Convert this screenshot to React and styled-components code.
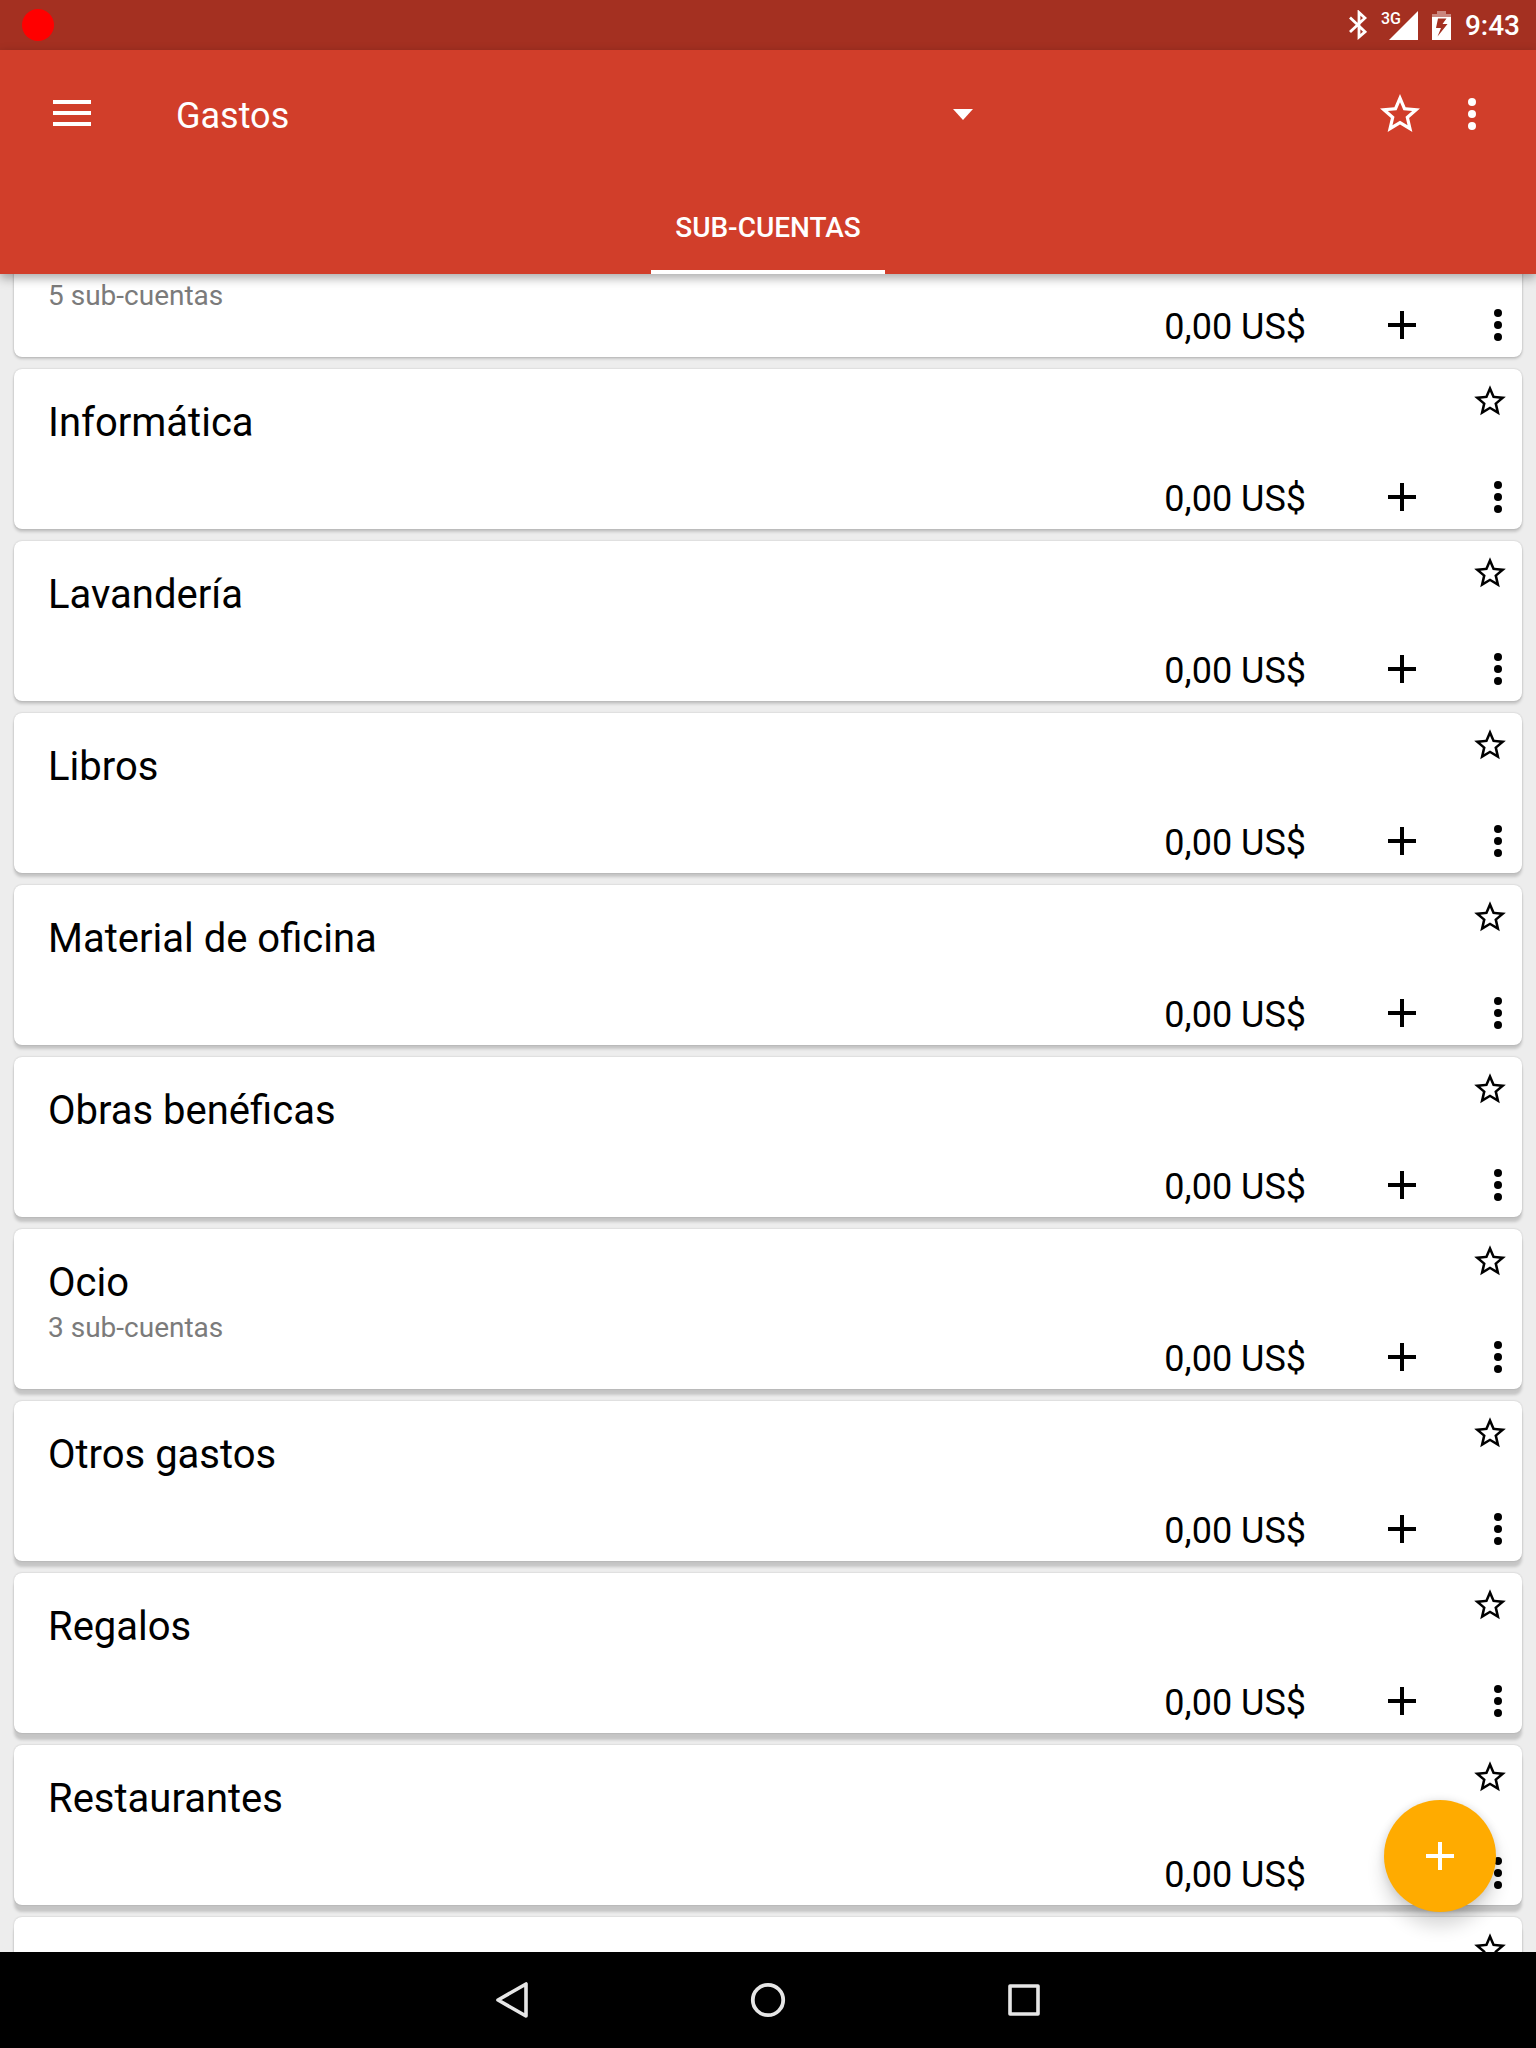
import React, { useLayoutEffect, useRef } from "react";
import styled, { createGlobalStyle } from "styled-components";

const GlobalStyle = createGlobalStyle`
  *, *::before, *::after { box-sizing: border-box; }
  body { margin: 0; font-family: Roboto, "Noto Sans", sans-serif; color: #000; background: #ededed; }
  button, select { font: inherit; color: inherit; }
  svg { display: block; }
`;

const Screen = styled.div`
  display: flex;
  flex-direction: column;
  height: 100vh;
  overflow: hidden;
`;

const StatusBar = styled.div`
  display: flex;
  flex: none;
  align-items: center;
  height: 50px;
  padding: 0 16px 0 22px;
  background: #a43021;
  color: #fff;
`;

const RecordDot = styled.span`
  width: 32px;
  height: 32px;
  margin-right: auto;
  border-radius: 50%;
  background: #f00;
`;

const StatusIcons = styled.div`
  display: flex;
  align-items: center;
  gap: 14px;
`;

const Signal = styled.span`
  display: flex;
  align-items: flex-start;
  font-size: 16px;
  line-height: 16px;
  font-weight: 500;

  svg {
    margin-left: -12px;
  }
`;

const Clock = styled.time`
  padding-top: 2px;
  font-size: 28px;
  line-height: 32px;
  font-weight: 500;
`;

const Header = styled.header`
  flex: none;
  position: relative;
  z-index: 1;
  background: #d13e2a;
  color: #fff;
  box-shadow: 0 4px 10px rgba(0, 0, 0, 0.34);
`;

const Toolbar = styled.div`
  display: flex;
  align-items: center;
  height: 128px;
  padding: 0 40px 0 48px;
`;

const IconButton = styled.button`
  display: flex;
  flex: none;
  align-items: center;
  justify-content: center;
  width: ${(p) => p.$size || 48}px;
  height: ${(p) => p.$size || 48}px;
  padding: 0;
  border: 0;
  background: none;
  cursor: pointer;
`;

const AccountPicker = styled.div`
  display: grid;
  flex: 0 1 812px;
  align-items: center;
  margin-left: 80px;

  select,
  svg {
    grid-area: 1 / 1;
  }

  svg {
    justify-self: end;
    margin-right: 15px;
    pointer-events: none;
  }
`;

const AccountSelect = styled.select`
  width: 100%;
  height: 64px;
  padding: 4px 0 0;
  border: 0;
  appearance: none;
  background: none;
  font-size: 36px;
  line-height: 48px;

  option {
    color: #000;
  }
`;

const ToolbarActions = styled.div`
  display: flex;
  gap: 24px;
  margin-left: auto;
`;

const Tabs = styled.div`
  display: flex;
  justify-content: center;
  height: 96px;
`;

const Tab = styled.button`
  padding: 8px 24px 0;
  border: 0;
  border-bottom: 4px solid #fff;
  background: none;
  font-size: 28px;
  line-height: 32px;
  font-weight: 500;
  text-transform: uppercase;
`;

const Content = styled.main`
  position: relative;
  flex: 1;
  min-height: 0;
`;

const AccountList = styled.ul`
  display: flex;
  flex-direction: column;
  gap: 12px;
  height: 100%;
  margin: 0;
  padding: 12px 14px;
  overflow-y: auto;
  scrollbar-width: none;
  list-style: none;
`;

const Card = styled.li`
  display: flex;
  flex: none;
  justify-content: space-between;
  height: 160px;
  border-radius: 8px;
  background: #fff;
  box-shadow: 0 0 2px rgba(0, 0, 0, 0.2),
    0 ${(p) => p.$depth}px 3px rgba(0, 0, 0, 0.17);
`;

const AccountInfo = styled.div`
  padding: 28px 0 0 34px;
`;

const AccountName = styled.h2`
  margin: 0;
  font-size: 40px;
  line-height: 52px;
  font-weight: 400;
`;

const SubAccounts = styled.p`
  margin: ${(p) => (p.$alone ? 52 : 0)}px 0 0;
  color: #7b7b7b;
  font-size: 28px;
  line-height: 38px;
`;

const CardSide = styled.div`
  display: flex;
  flex-direction: column;
  align-items: flex-end;
  justify-content: space-between;
  padding-bottom: 8px;

  > button {
    margin: 13px 13px 0 0;
  }
`;

const CardActions = styled.div`
  display: flex;
  align-items: center;
  gap: 48px;
`;

const Balance = styled.span`
  margin-right: 24px;
  padding-top: 4px;
  font-size: 36px;
  line-height: 44px;
`;

const Fab = styled.button`
  position: absolute;
  right: 40px;
  bottom: 40px;
  z-index: 1;
  display: flex;
  align-items: center;
  justify-content: center;
  width: 112px;
  height: 112px;
  padding: 0;
  border: 0;
  border-radius: 50%;
  background: #ffab00;
  color: #fff;
  box-shadow: 0 14px 18px rgba(0, 0, 0, 0.16), 0 0 8px rgba(0, 0, 0, 0.12);
`;

const NavBar = styled.nav`
  display: flex;
  flex: none;
  justify-content: center;
  gap: 160px;
  height: 96px;
  background: #000;
  color: #e6e6e6;
`;

const StarIcon = ({ size = 48 }) => (
  <svg width={size} height={size} viewBox="0 0 24 24" fill="currentColor" aria-hidden="true">
    <path d="M22 9.24l-7.19-.62L12 2 9.19 8.63 2 9.24l5.46 4.73L5.82 21 12 17.27 18.18 21l-1.63-7.03L22 9.24zM12 15.4l-3.76 2.27 1-4.28-3.32-2.88 4.38-.38L12 6.1l1.71 4.04 4.38.38-3.32 2.88 1 4.28L12 15.4z" />
  </svg>
);

const MoreIcon = () => (
  <svg width="48" height="48" viewBox="0 0 48 48" fill="currentColor" aria-hidden="true">
    <circle cx="24" cy="12" r="4" />
    <circle cx="24" cy="24" r="4" />
    <circle cx="24" cy="36" r="4" />
  </svg>
);

const PlusIcon = () => (
  <svg width="48" height="48" viewBox="0 0 48 48" fill="currentColor" aria-hidden="true">
    <path d="M22 10h4v12h12v4H26v12h-4V26H10v-4h12z" />
  </svg>
);

const MenuIcon = () => (
  <svg width="38" height="28" viewBox="0 0 38 28" fill="currentColor" aria-hidden="true">
    <path d="M0 0h38v4H0zM0 11h38v4H0zM0 22h38v4H0z" />
  </svg>
);

const BluetoothIcon = () => (
  <svg width="18" height="30" viewBox="0 0 18 30" fill="none" stroke="currentColor" strokeWidth="2.8" aria-hidden="true">
    <path d="M1 7.5L16 21.8 10 27V2.5L16 8 1 22" />
  </svg>
);

const SignalIcon = () => (
  <svg width="29" height="29" viewBox="0 0 29 29" fill="currentColor" aria-hidden="true">
    <path d="M29 0v29H0z" />
  </svg>
);

const BatteryIcon = () => (
  <svg width="19" height="29" viewBox="0 0 19 29" fill="currentColor" aria-hidden="true">
    <path opacity="0.42" d="M5 0h9v3h5v3H0V3h5z" />
    <path fillRule="evenodd" d="M0 6h19v23H0zM6 7.500L4 17H9L5.500 25.500 15.500 13H10.500L14.500 7.500z" />
  </svg>
);

const accounts = [
  { id: 1, children: 5, balance: "0,00 US$" },
  { id: 2, name: "Informática", balance: "0,00 US$" },
  { id: 3, name: "Lavandería", balance: "0,00 US$" },
  { id: 4, name: "Libros", balance: "0,00 US$" },
  { id: 5, name: "Material de oficina", balance: "0,00 US$" },
  { id: 6, name: "Obras benéficas", balance: "0,00 US$" },
  { id: 7, name: "Ocio", children: 3, balance: "0,00 US$" },
  { id: 8, name: "Otros gastos", balance: "0,00 US$" },
  { id: 9, name: "Regalos", balance: "0,00 US$" },
  { id: 10, name: "Restaurantes", balance: "0,00 US$" },
  { id: 11 },
];

function AccountCard({ account, depth }) {
  return (
    <Card $depth={depth}>
      <AccountInfo>
        {account.name && <AccountName>{account.name}</AccountName>}
        {account.children && (
          <SubAccounts $alone={!account.name}>{account.children} sub-cuentas</SubAccounts>
        )}
      </AccountInfo>
      <CardSide>
        <IconButton $size={38} aria-label="Favorita">
          <StarIcon size={38} />
        </IconButton>
        <CardActions>
          {account.balance && <Balance>{account.balance}</Balance>}
          <IconButton aria-label="Añadir transacción">
            <PlusIcon />
          </IconButton>
          <IconButton aria-label="Opciones de cuenta">
            <MoreIcon />
          </IconButton>
        </CardActions>
      </CardSide>
    </Card>
  );
}

export default function App() {
  const listRef = useRef(null);

  // Open the list part-way through its first card.
  useLayoutEffect(() => {
    listRef.current.scrollTop = 89;
  }, []);

  return (
    <Screen>
      <GlobalStyle />
      <StatusBar>
        <RecordDot />
        <StatusIcons>
          <BluetoothIcon />
          <Signal>
            3G
            <SignalIcon />
          </Signal>
          <BatteryIcon />
          <Clock>9:43</Clock>
        </StatusIcons>
      </StatusBar>
      <Header>
        <Toolbar>
          <IconButton aria-label="Menú">
            <MenuIcon />
          </IconButton>
          <AccountPicker>
            <AccountSelect aria-label="Cuenta" defaultValue="Gastos">
              <option>Gastos</option>
            </AccountSelect>
            <svg width="20" height="11" viewBox="0 0 20 11" fill="currentColor" aria-hidden="true">
              <path d="M0 0h20L10 11z" />
            </svg>
          </AccountPicker>
          <ToolbarActions>
            <IconButton aria-label="Favorita">
              <StarIcon />
            </IconButton>
            <IconButton aria-label="Más opciones">
              <MoreIcon />
            </IconButton>
          </ToolbarActions>
        </Toolbar>
        <Tabs role="tablist">
          <Tab role="tab" aria-selected="true">
            Sub-cuentas
          </Tab>
        </Tabs>
      </Header>
      <Content>
        <AccountList ref={listRef}>
          {accounts.map((account, index) => (
            <AccountCard key={account.id} account={account} depth={2 + Math.round(index * 0.6)} />
          ))}
        </AccountList>
        <Fab aria-label="Nueva cuenta">
          <PlusIcon />
        </Fab>
      </Content>
      <NavBar>
        <IconButton $size={96} aria-label="Atrás">
          <svg width="40" height="40" viewBox="0 0 40 40" fill="none" stroke="currentColor" strokeWidth="3.6" strokeLinejoin="round">
            <path d="M34 4v32L6 20z" />
          </svg>
        </IconButton>
        <IconButton $size={96} aria-label="Inicio">
          <svg width="40" height="40" viewBox="0 0 40 40" fill="none" stroke="currentColor" strokeWidth="3.8">
            <circle cx="20" cy="20" r="15.2" />
          </svg>
        </IconButton>
        <IconButton $size={96} aria-label="Recientes">
          <svg width="40" height="40" viewBox="0 0 40 40" fill="none" stroke="currentColor" strokeWidth="3.6" strokeLinejoin="round">
            <path d="M6 6h28v28H6z" />
          </svg>
        </IconButton>
      </NavBar>
    </Screen>
  );
}
